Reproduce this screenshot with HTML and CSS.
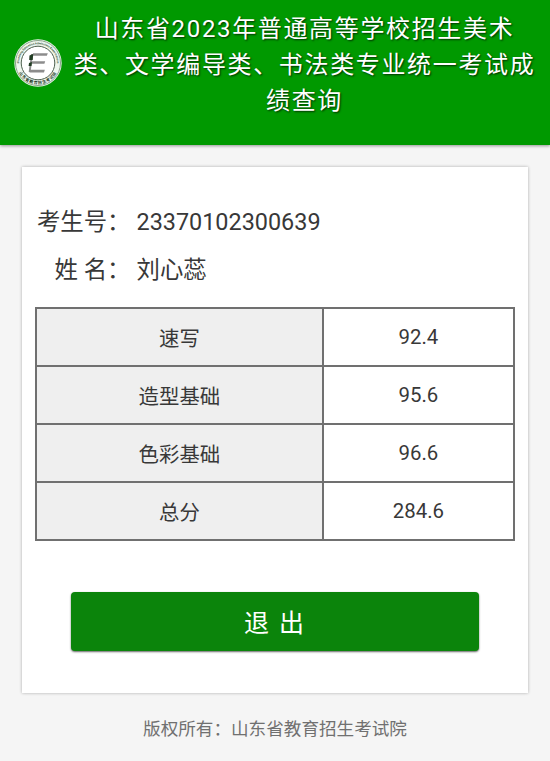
FILE: index.html
```
<!DOCTYPE html>
<html lang="zh-CN">

<head>
  <meta charset="utf-8">
  <meta name="viewport" content="width=device-width">
  <title>成绩查询</title>
  <link rel="stylesheet" href="styles.css">
</head>

<body>

  <header class="header">
    <svg class="logo" viewBox="0 0 48 48">
      <defs>
        <path id="arcTop" d="M5.2 27 A19 19 0 1 1 42.8 27" />
        <path id="arcBottom" d="M3.4 29 A21.2 21.2 0 0 0 44.6 29" />
      </defs>
      <circle cx="24" cy="24" r="23.7" fill="#eef6ee" />
      <circle cx="24" cy="24" r="22.5" fill="none" stroke="#6f8d70" stroke-width="0.8" />
      <circle cx="24" cy="24" r="16.8" fill="#fff" stroke="#4d5f4e" stroke-width="1" />
      <text class="logo-en"><textPath href="#arcTop" startOffset="50%">Shandong Education Admissions Examinations</textPath></text>
      <text class="logo-cn"><textPath href="#arcBottom" startOffset="50%">山东省教育招生考试院</textPath></text>
      <g fill="#8c8c8c">
        <path d="M19 14.3H33.8L32.8 16.8H18.5Z" />
        <path d="M18 22.3H31.2L30.4 24.8H17.5Z" />
        <path d="M16.2 30.8H30.8L30 33.6H15.5Z" />
        <path d="M17 15H19L16.6 33H14.7Z" />
      </g>
      <g fill="#203c22">
        <path d="M15.5 16.5L19.2 15L18.7 21H15.2Z" />
        <path d="M15 24L18 23L17.5 27H14.6Z" />
      </g>
    </svg>
    <h1>山东省2023年普通高等学校招生美术类、文学编导类、书法类专业统一考试成绩查询</h1>
  </header>

  <main class="card">
    <dl class="info">
      <dt>考生号：</dt>
      <dd>23370102300639</dd>
      <dt>姓 名：</dt>
      <dd>刘心蕊</dd>
    </dl>

    <table class="scores">
      <tr>
        <th>速写</th>
        <td>92.4</td>
      </tr>
      <tr>
        <th>造型基础</th>
        <td>95.6</td>
      </tr>
      <tr>
        <th>色彩基础</th>
        <td>96.6</td>
      </tr>
      <tr>
        <th>总分</th>
        <td>284.6</td>
      </tr>
    </table>

    <button class="exit" type="button">退 出</button>
  </main>

  <footer>版权所有：山东省教育招生考试院</footer>

</body>

</html>
```

FILE: styles.css
```
* {
  box-sizing: border-box;
}

body {
  margin: 0;
  background: #f5f5f5;
  color: #383838;
  font-family: Roboto, "Noto Sans CJK SC", sans-serif;
}

.header {
  display: flex;
  height: 145px;
  padding: 11px 13px 0 14px;
  background: #009900;
  box-shadow: 0 1px 3px rgba(0, 0, 0, 0.4);
}

.logo {
  flex: none;
  width: 48px;
  height: 48px;
  margin-top: 28px;
}

.logo-en {
  font-size: 2.8px;
  font-weight: bold;
  fill: #2f4f30;
  text-anchor: middle;
}

.logo-cn {
  font-size: 4px;
  font-weight: bold;
  letter-spacing: 0.6px;
  fill: #1c3a1e;
  text-anchor: middle;
}

h1 {
  flex: 1;
  margin: 0 0 0 10px;
  color: #fff;
  font-size: 24px;
  font-weight: normal;
  line-height: 36px;
  letter-spacing: 1.65px;
  text-align: center;
  text-shadow: 1px 1px 2px rgba(0, 0, 0, 0.7);
}

.card {
  height: 526px;
  margin: 22px 22px 0;
  padding: 31px 13px 0;
  background: #fff;
  box-shadow: 0 0 3px rgba(0, 0, 0, 0.3);
}

.info {
  display: grid;
  grid-template-columns: 95.5px 1fr;
  column-gap: 6px;
  margin: 0 0 13px;
  font-size: 23.4px;
  line-height: 48px;
}

.info dt {
  text-align: right;
  white-space: nowrap;
}

.info dd {
  margin: 0;
}

.scores {
  width: 480px;
  border-collapse: collapse;
  table-layout: fixed;
  font-size: 20.4px;
}

.scores th,
.scores td {
  height: 58px;
  padding: 0;
  border: 2px solid #707070;
  font-weight: normal;
  text-align: center;
}

.scores th {
  width: 60%;
  background: #efefef;
}

.exit {
  display: block;
  width: 408px;
  height: 59px;
  margin: 51px auto 0;
  padding: 0 0 1px;
  border: 0;
  border-radius: 4px;
  background: #0b840b;
  box-shadow: 0 1px 2px rgba(0, 0, 0, 0.6);
  color: #fff;
  font-family: inherit;
  font-size: 25px;
  letter-spacing: 2px;
}

footer {
  margin-top: 23px;
  color: #707070;
  font-size: 17.6px;
  line-height: 26px;
  text-align: center;
}
```
